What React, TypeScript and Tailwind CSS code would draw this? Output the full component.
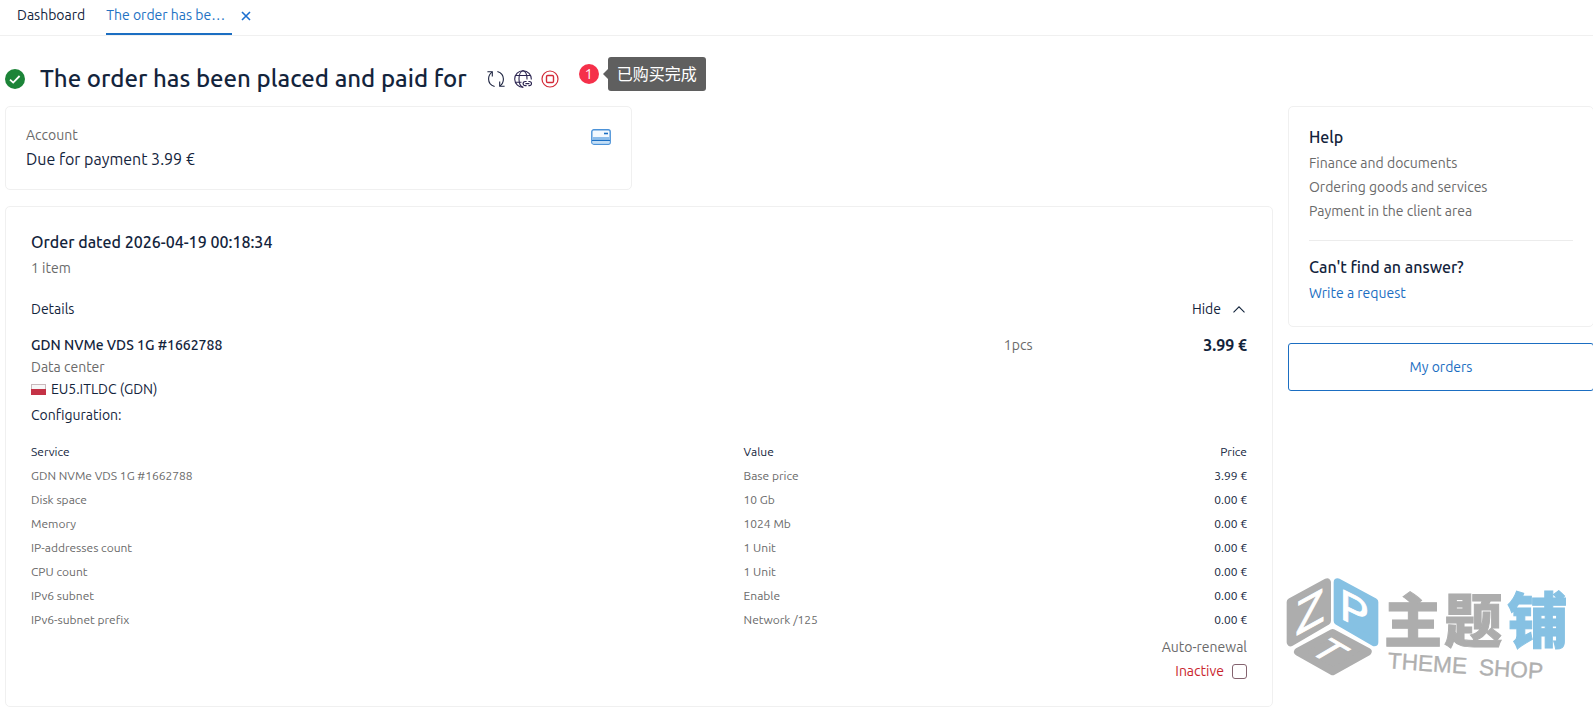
import React from "react";

const rows = [
  ["GDN NVMe VDS 1G #1662788", "Base price", "3.99 €"],
  ["Disk space", "10 Gb", "0.00 €"],
  ["Memory", "1024 Mb", "0.00 €"],
  ["IP-addresses count", "1 Unit", "0.00 €"],
  ["CPU count", "1 Unit", "0.00 €"],
  ["IPv6 subnet", "Enable", "0.00 €"],
  ["IPv6-subnet prefix", "Network /125", "0.00 €"],
];

const helpLinks = ["Finance and documents", "Ordering goods and services", "Payment in the client area"];

function TabBar() {
  return (
    <nav className="flex h-9 items-start border-b border-[#f0f0f0] pl-[17px] text-sm">
      <a href="#dashboard" className="flex h-[35px] items-center pb-[5px]">
        Dashboard
      </a>
      <a
        href="#order"
        className="ml-[21px] flex h-[35px] w-[126px] items-center border-b-2 border-[#1b6ec2] pb-[3px] whitespace-nowrap text-[#2272c3]"
      >
        The order has be…
      </a>
      <button type="button" aria-label="Close tab" className="ml-2 flex h-8 w-3 items-center justify-center">
        <svg viewBox="0 0 10 10" className="size-[10px]" fill="none" stroke="#1b6fd0" strokeWidth="1.6">
          <path d="M1 1l8 8M9 1L1 9" />
        </svg>
      </button>
    </nav>
  );
}

function Heading() {
  return (
    <header className="flex h-[70px] items-center pt-4">
      <svg viewBox="0 0 20 20" className="size-5 shrink-0">
        <circle cx="10" cy="10" r="10" fill="#1c8438" />
        <path d="M5 10.6l3.2 3L14.6 7" fill="none" stroke="#fff" strokeWidth="1.8" />
      </svg>
      <h1 className="ml-[15px] text-2xl font-medium whitespace-nowrap">The order has been placed and paid for</h1>
      <div className="ml-5 flex gap-[9px]">
        <button type="button" aria-label="Refresh">
          <svg viewBox="0 0 18 18" className="size-[18px]" fill="none" stroke="#1d2440" strokeWidth="1.1">
            <path d="M7.6 16.6C3.8 15.4 1.6 12.6 1.6 9c0-2.9 1.2-5.3 3.4-6.9" />
            <path d="M.4 1.7h4.9v4.7" />
            <path d="M10.4 1.4c3.8 1.2 6 4 6 7.6 0 2.9-1.2 5.3-3.4 6.9" />
            <path d="M17.6 16.3h-4.900v-4.700" />
          </svg>
        </button>
        <button type="button" aria-label="Website">
          <svg viewBox="0 0 18 18" className="size-[18px]" fill="none" stroke="#2b2450" strokeWidth="1.1">
            <path d="M9.5 17.300A8.300 8.300 0 1 1 17.300 9.500" />
            <path d="M9 17.300C6.500 16.500 5 13 5 9S6.600 1.200 9 .7c2.400.5 4 4 4 8.300v.5" />
            <path d="M1.700 5.500h14.600M1.700 12.300h5.800" />
            <path d="M12.600 11.500h-1.400a2.100 2.100 0 0 0 0 4.200h1.400M14.400 11.500h1a2.100 2.100 0 0 1 0 4.200h-1M11.400 13.600h4" strokeWidth="1.200" />
          </svg>
        </button>
        <button type="button" aria-label="Stop">
          <svg viewBox="0 0 18 18" className="size-[18px]" fill="none" stroke="#d32a38" strokeWidth="1.2">
            <circle cx="9" cy="9" r="8" />
            <rect x="5.5" y="5.5" width="7" height="7" rx="1.2" strokeWidth="1.4" />
          </svg>
        </button>
      </div>
      <div className="mb-[10px] ml-5 flex items-center">
        <span className="flex size-5 items-center justify-center rounded-full bg-[#f5304a] text-sm text-white">1</span>
        <span className="ml-1 h-0 w-0 border-y-[5px] border-r-[5px] border-y-transparent border-r-[#5f5f5f]" />
        <span className="flex h-[34px] items-center rounded-[3px] bg-[#5f5f5f] px-[9px] pb-[2px] font-['Noto_Sans_CJK_SC',sans-serif] text-base whitespace-nowrap text-white">
          已购买完成
        </span>
      </div>
    </header>
  );
}

function AccountCard() {
  return (
    <section className="flex h-[84px] items-start justify-between rounded-[5px] border border-[#f0f0f0] px-5 pt-4">
      <div>
        <p className="text-sm leading-6 text-[#6a6a6a]">Account</p>
        <p className="text-base leading-6">Due for payment 3.99 €</p>
      </div>
      <svg viewBox="0 0 20 16" className="mt-[6px] h-4 w-5" fill="none">
        <rect x=".8" y=".8" width="18.4" height="14.4" rx="2" fill="#f3f9fe" stroke="#4b92d8" strokeWidth="1.400" />
        <path d="M1.500 8h17v3.500h-17z" fill="#8dbdea" />
        <path d="M1 11.500h18" stroke="#1b6ec2" strokeWidth="1.100" />
        <path d="M1.500 12h17v2.500h-17z" fill="#c3def6" />
        <path d="M13 4.500h4" stroke="#1b6ec2" strokeWidth="1.600" />
      </svg>
    </section>
  );
}

function OrderCard() {
  return (
    <section className="rounded-[5px] border border-[#f0f0f0] px-[25px] pt-[23px] pb-[23px] text-sm">
      <h2 className="text-base leading-6 font-medium">Order dated 2026-04-19 00:18:34</h2>
      <p className="mt-[2px] leading-6 text-[#6a6a6a]">1 item</p>
      <div className="mt-[17px] flex items-center justify-between leading-6">
        <span>Details</span>
        <button type="button" className="flex items-center gap-3">
          Hide
          <svg viewBox="0 0 12 8" className="mr-[2px] h-2 w-3" fill="none" stroke="#13243c" strokeWidth="1.1">
            <path d="M.5 7.300L6 1.800l5.500 5.500" />
          </svg>
        </button>
      </div>
      <div className="mt-3 flex leading-6">
        <h3 className="w-[80%] font-medium">GDN NVMe VDS 1G #1662788</h3>
        <span className="text-[#6a6a6a]">1pcs</span>
        <span className="ml-auto text-base leading-6 font-semibold">3.99 €</span>
      </div>
      <p className="leading-[21px] text-[#6a6a6a]">Data center</p>
      <p className="flex items-center gap-[5px] leading-[22px]">
        <svg viewBox="0 0 15 11" className="h-[11px] w-[15px]">
          <rect x=".5" y=".5" width="14" height="10" fill="#f7f7f7" stroke="#c9b9bc" />
          <path d="M0 5h15v6H0z" fill="#c43246" />
        </svg>
        EU5.ITLDC (GDN)
      </p>
      <p className="mt-[3px] leading-6">Configuration:</p>
      <table className="mt-[13px] w-full table-fixed text-left text-xs">
        <thead>
          <tr className="h-6">
            <th className="w-[58.6%] p-0 font-normal">Service</th>
            <th className="p-0 font-normal">Value</th>
            <th className="p-0 text-right font-normal">Price</th>
          </tr>
        </thead>
        <tbody>
          {rows.map(([service, value, price]) => (
            <tr key={service} className="h-6 text-[#6a6a6a]">
              <td className="p-0">{service}</td>
              <td className="p-0">{value}</td>
              <td className="p-0 text-right text-[#13243c]">{price}</td>
            </tr>
          ))}
        </tbody>
      </table>
      <div className="mt-[3px] flex flex-col items-end leading-6">
        <span className="text-[#6a6a6a]">Auto-renewal</span>
        <label className="flex items-center gap-2 text-[#c9252d]">
          Inactive
          <input type="checkbox" className="size-[15px] appearance-none rounded-[3px] border border-[#84636f] bg-white" />
        </label>
      </div>
    </section>
  );
}

function Sidebar() {
  return (
    <aside className="-mr-px w-[306px] shrink-0 text-sm">
      <section className="rounded-[5px] border border-[#f0f0f0] px-5 pt-[18px] pb-[21px]">
        <h2 className="text-base leading-6 font-medium">Help</h2>
        <ul className="mt-[2px] leading-6 text-[#6a6a6a]">
          {helpLinks.map((link) => (
            <li key={link}>
              <a href="#help">{link}</a>
            </li>
          ))}
        </ul>
        <hr className="mt-[17px] border-[#ececec]" />
        <h2 className="mt-[14px] text-base leading-6 font-medium">Can't find an answer?</h2>
        <a href="#request" className="mt-[2px] block leading-6 text-[#1b6ec2]">
          Write a request
        </a>
      </section>
      <button type="button" className="mt-4 h-12 w-full rounded-[3px] border border-[#1b6ec2] text-[#1b6ec2]">
        My orders
      </button>
    </aside>
  );
}

function ShopLogo() {
  return (
    <svg
      viewBox="30 30 900 360"
      className="pointer-events-none absolute right-[13px] bottom-[17px] h-[120px] w-[300px]"
      role="img"
      aria-label="主题铺 THEME SHOP"
    >
      <g strokeLinejoin="round" strokeWidth="24">
        <path d="M62 126L171 67V183L62 247Z" fill="#adadad" stroke="#adadad" />
        <path d="M203 67L313 126V247L203 183Z" fill="#86c1e3" stroke="#86c1e3" />
        <path d="M84 275L188 219L293 275L188 334Z" fill="#adadad" stroke="#adadad" />
      </g>
      <g fill="#fff" stroke="#fff" strokeWidth="3" fontFamily="Liberation Sans, sans-serif" textAnchor="middle">
        <text transform="matrix(1 -0.55 0 1 120 204)" fontSize="142">Z</text>
        <text transform="matrix(1 0.5 0 1 253 196)" fontSize="130">P</text>
        <text transform="matrix(0.85 0.5 -0.85 0.5 143 292)" fontSize="120">T</text>
      </g>
      <g fontFamily="Noto Sans CJK SC, sans-serif" fontWeight="900" fontSize="174" strokeWidth="3">
        <text x="342" y="246" fill="#adadad" stroke="#adadad">主</text>
        <text x="523" y="246" fill="#adadad" stroke="#adadad">题</text>
        <text x="712" y="250" fontSize="182" fill="#86c1e3" stroke="#86c1e3">铺</text>
      </g>
      <g transform="rotate(4 354 326)" fontFamily="Liberation Sans, sans-serif" fontSize="68" fill="#b0b0b0" stroke="#b0b0b0" strokeWidth="1">
        <text x="352" y="325">THEME</text>
        <text x="626" y="325">SHOP</text>
      </g>
    </svg>
  );
}

export default function App() {
  return (
    <div className="relative min-h-screen overflow-x-clip bg-white font-[Ubuntu,'Noto_Sans',sans-serif] text-[#13243c]">
      <TabBar />
      <main className="pl-[5px]">
        <Heading />
        <div className="flex items-start gap-[15px]">
          <div className="flex min-w-0 flex-1 flex-col gap-4">
            <div className="grid grid-cols-2 gap-[14px]">
              <AccountCard />
            </div>
            <OrderCard />
          </div>
          <Sidebar />
        </div>
      </main>
      <ShopLogo />
    </div>
  );
}
